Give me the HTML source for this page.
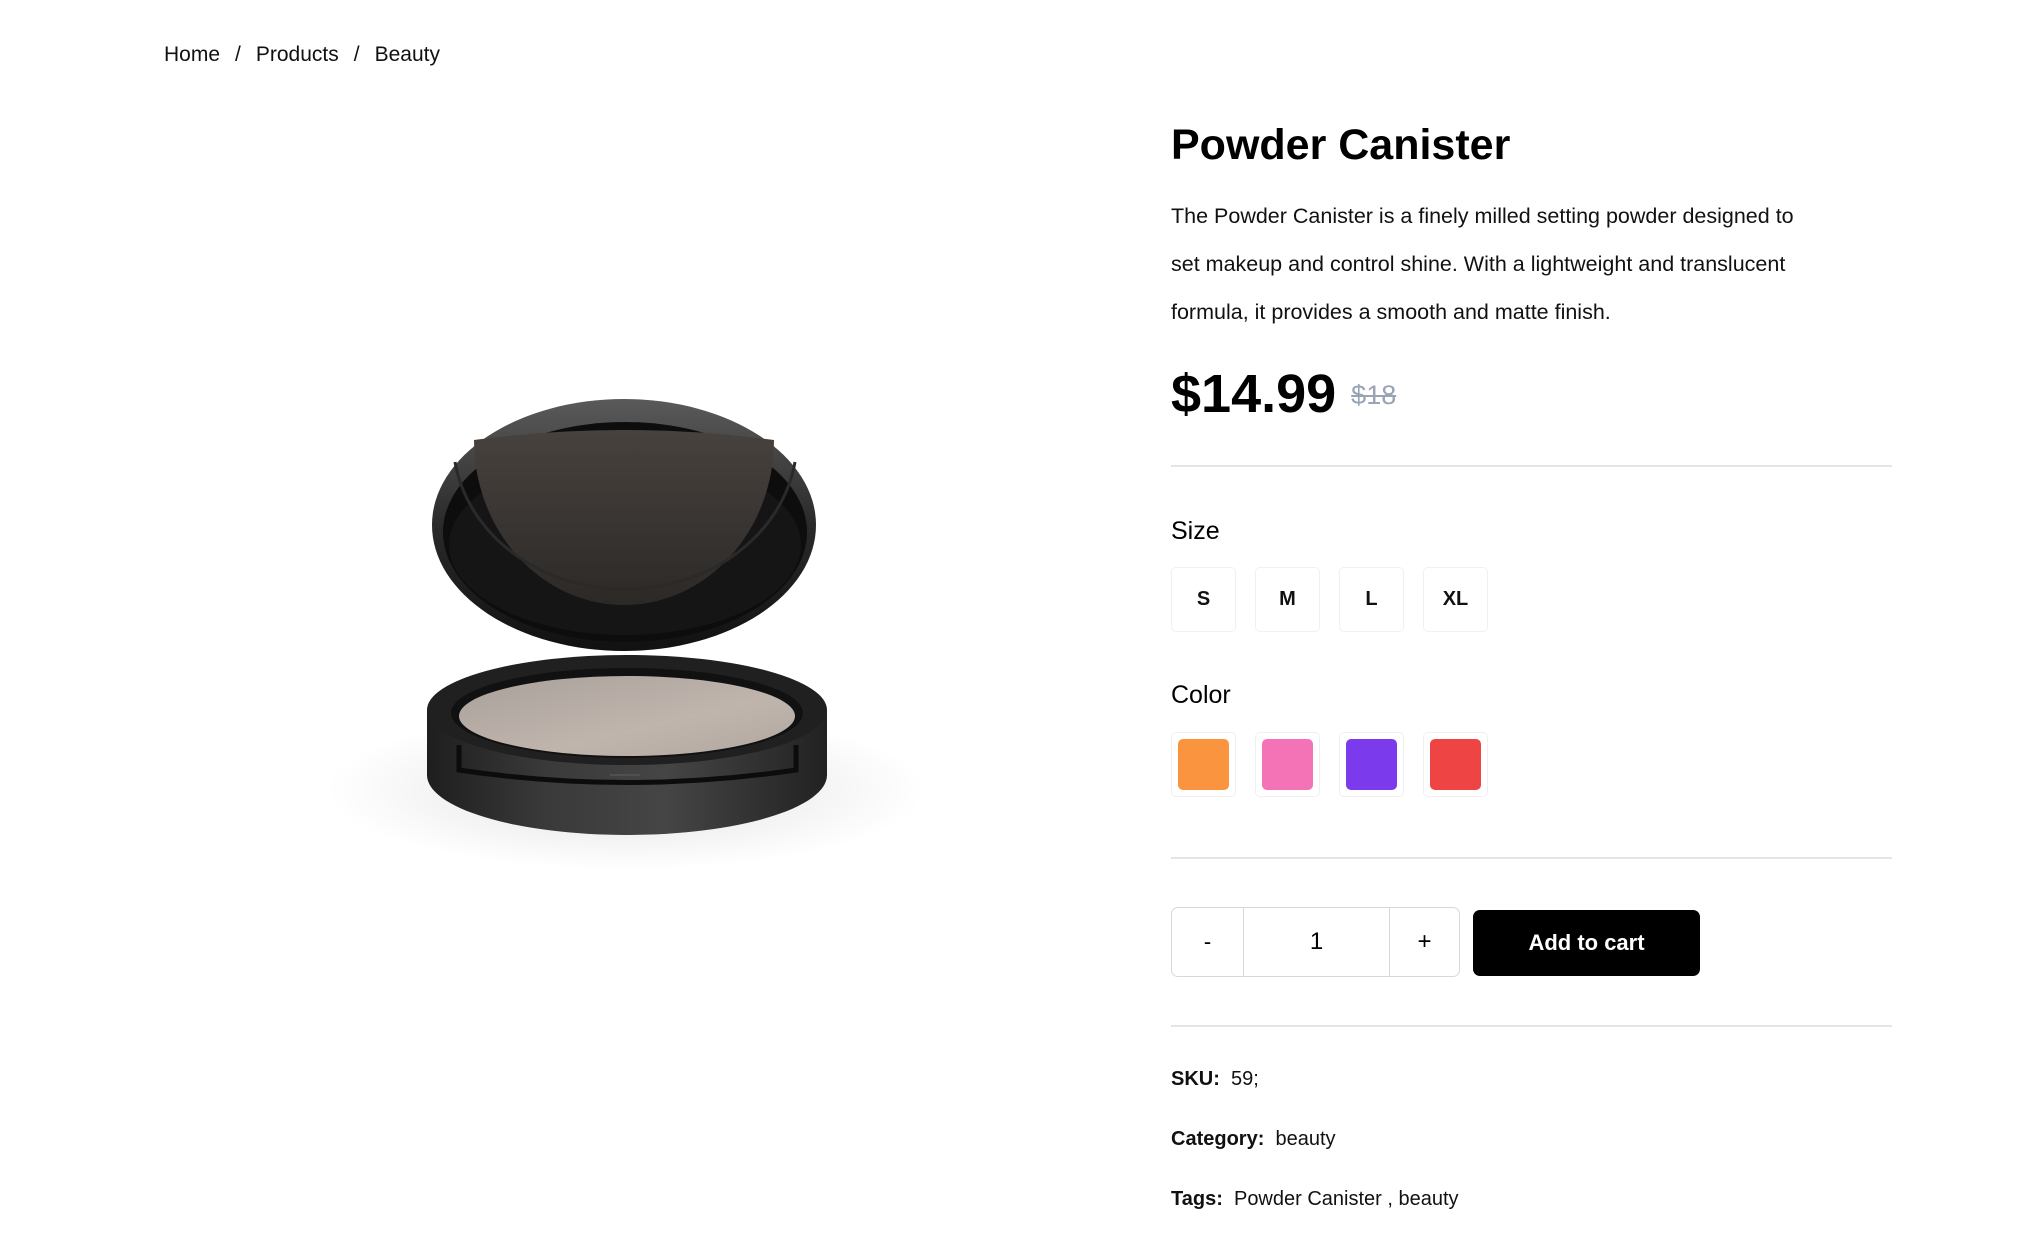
<!DOCTYPE html>
<html><head><meta charset="utf-8"><style>
*{margin:0;padding:0;box-sizing:border-box}
body{width:2034px;height:1237px;background:#fff;font-family:"Liberation Sans",sans-serif;color:#111;position:relative;overflow:hidden}
.a{position:absolute;white-space:nowrap}
.rule{position:absolute;left:1171px;width:721px;height:2px;background:#e3e5ea}
.sz{position:absolute;top:567px;width:65px;height:65px;border:1.5px solid #f0f0f2;border-radius:5px;font-size:20px;font-weight:bold;display:flex;align-items:center;justify-content:center}
.cl{position:absolute;top:732px;width:65px;height:65px;border:1.5px solid #f0f0f2;border-radius:5px}
.cl i{position:absolute;left:6px;top:6px;right:6px;bottom:6px;border-radius:5px}
</style></head><body>
<div class="a" style="left:164px;top:42px;font-size:21px;line-height:26px">Home<span style="margin:0 15px">/</span>Products<span style="margin:0 15px">/</span>Beauty</div>

<svg class="a" style="left:0;top:0" width="1100" height="1000" viewBox="0 0 1100 1000">
<defs>
<radialGradient id="sh" cx="50%" cy="50%" r="50%"><stop offset="0" stop-color="#000" stop-opacity=".12"/><stop offset="1" stop-color="#000" stop-opacity="0"/></radialGradient>
<linearGradient id="side" x1="0" x2="1"><stop offset="0" stop-color="#1e1e1e"/><stop offset=".3" stop-color="#3a3a3a"/><stop offset=".6" stop-color="#454545"/><stop offset="1" stop-color="#222"/></linearGradient>
<linearGradient id="lid" x1="0" y1="0" x2="0" y2="1"><stop offset="0" stop-color="#5a5a5a"/><stop offset=".5" stop-color="#2a2a2a"/><stop offset="1" stop-color="#111"/></linearGradient>
<linearGradient id="pw" x1="0" y1="0" x2="1" y2="1"><stop offset="0" stop-color="#a9a09a"/><stop offset=".6" stop-color="#bfb5ad"/><stop offset="1" stop-color="#b2a79f"/></linearGradient>
<linearGradient id="mir" x1="0" y1="0" x2="0" y2="1"><stop offset="0" stop-color="#48423e"/><stop offset="1" stop-color="#2c2927"/></linearGradient>
</defs>
<ellipse cx="626" cy="790" rx="300" ry="80" fill="url(#sh)"/>
<ellipse cx="624" cy="525" rx="192" ry="126" fill="url(#lid)"/>
<ellipse cx="625" cy="532" rx="182" ry="110" fill="#0d0d0d"/>
<ellipse cx="625" cy="545" rx="176" ry="90" fill="#151515"/>
<path d="M474 440 Q624 420 774 440 A150 165 0 0 1 474 440 Z" fill="url(#mir)"/>
<path d="M455 462 A172 150 0 0 0 795 462" fill="none" stroke="#2a2a2a" stroke-width="3"/>
<path d="M427 710 L427 775 A200 60 0 0 0 827 775 L827 710 Z" fill="url(#side)"/>
<ellipse cx="627" cy="710" rx="200" ry="55" fill="#202020"/>
<ellipse cx="627" cy="713" rx="176" ry="45" fill="#111"/>
<ellipse cx="627" cy="716" rx="168" ry="40" fill="url(#pw)"/>
<path d="M459 745 L459 770 Q627 795 796 770 L796 745" fill="none" stroke="#0c0c0c" stroke-width="5"/>
<line x1="610" y1="775" x2="640" y2="775" stroke="#555" stroke-width="1.5"/>
</svg>

<div class="a" style="left:1171px;top:117px;font-size:43px;font-weight:bold;line-height:56px;color:#000">Powder Canister</div>
<div class="a" style="left:1171px;top:192px;font-size:21.5px;line-height:48px;color:#111">The Powder Canister is a finely milled setting powder designed to<br>set makeup and control shine. With a lightweight and translucent<br>formula, it provides a smooth and matte finish.</div>
<div class="a" style="left:1171px;top:362px;font-size:54px;font-weight:bold;line-height:64px;color:#000">$14.99 <span style="font-size:27px;font-weight:normal;color:#9aa3b5;text-decoration:line-through;vertical-align:8px">$18</span></div>
<div class="rule" style="top:465px"></div>
<div class="a" style="left:1171px;top:516px;font-size:25px;line-height:30px;color:#000">Size</div>
<div class="sz" style="left:1171px">S</div>
<div class="sz" style="left:1255px">M</div>
<div class="sz" style="left:1339px">L</div>
<div class="sz" style="left:1423px">XL</div>
<div class="a" style="left:1171px;top:680px;font-size:25px;line-height:30px;color:#000">Color</div>
<div class="cl" style="left:1171px"><i style="background:#fb943e"></i></div>
<div class="cl" style="left:1255px"><i style="background:#f472b6"></i></div>
<div class="cl" style="left:1339px"><i style="background:#7c3aed"></i></div>
<div class="cl" style="left:1423px"><i style="background:#ef4444"></i></div>
<div class="rule" style="top:857px"></div>
<div class="a" style="left:1171px;top:907px;width:289px;height:70px;border:1.5px solid #d6d8de;border-radius:7px;display:flex;font-size:22px;color:#000">
<div style="width:72px;border-right:1.5px solid #d6d8de;display:flex;align-items:center;justify-content:center">-</div>
<div style="width:146px;border-right:1.5px solid #d6d8de;display:flex;align-items:center;justify-content:center;font-size:24px">1</div>
<div style="flex:1;display:flex;align-items:center;justify-content:center;font-size:24px">+</div>
</div>
<div class="a" style="left:1473px;top:910px;width:227px;height:66px;background:#000;border-radius:7px;color:#fff;font-size:22px;font-weight:bold;display:flex;align-items:center;justify-content:center">Add to cart</div>
<div class="rule" style="top:1025px"></div>
<div class="a" style="left:1171px;top:1066px;font-size:20px;line-height:26px"><b>SKU:</b>&nbsp; 59;</div>
<div class="a" style="left:1171px;top:1126px;font-size:20px;line-height:26px"><b>Category:</b>&nbsp; beauty</div>
<div class="a" style="left:1171px;top:1186px;font-size:20px;line-height:26px"><b>Tags:</b>&nbsp; Powder Canister , beauty</div>
</body></html>
